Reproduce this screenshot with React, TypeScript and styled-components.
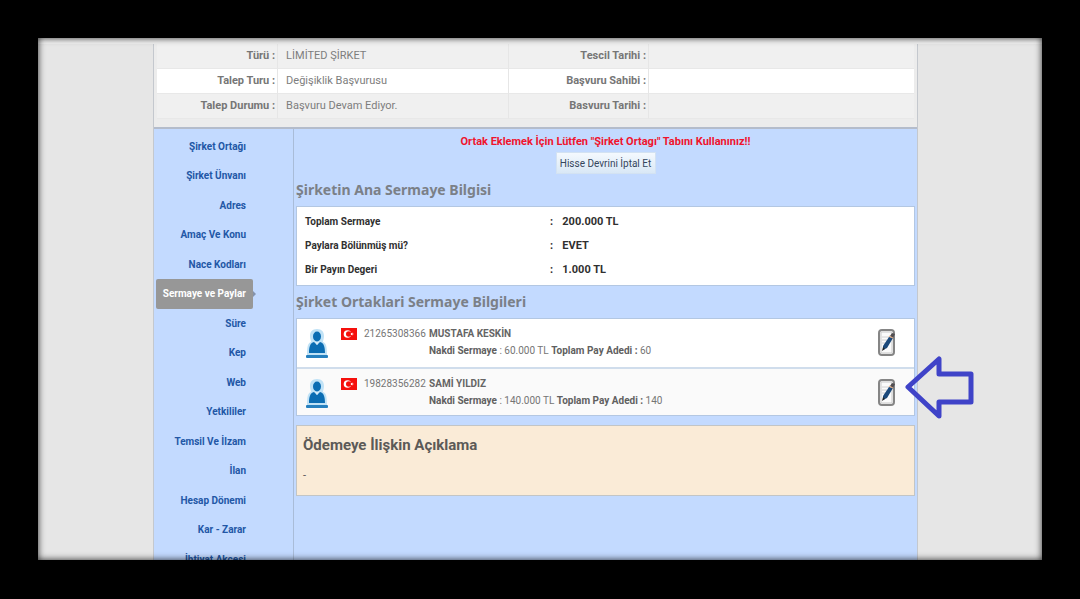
import React from "react";
import styled, { createGlobalStyle, css } from "styled-components";

const sans = `Roboto, "Liberation Sans", sans-serif`;
const heading = `"Noto Sans", "Open Sans", sans-serif`;

const GlobalStyle = createGlobalStyle`
  * { box-sizing: border-box; }
  body { margin: 0; background: #000; font-family: ${sans}; }
`;

const Stage = styled.div`
  display: flex;
  height: 100vh;
  padding: 38px 38px 39px;
  background: #000;
`;

const Frame = styled.div`
  position: relative;
  flex: 1;
  display: flex;
  flex-direction: column;
  overflow: hidden;
  background: #e6e6e6;

  &::after {
    content: "";
    position: absolute;
    inset: 0;
    box-shadow: inset 0 0 7px rgba(0, 0, 0, 0.85);
    pointer-events: none;
  }
`;

const TopStrip = styled.div`
  flex: none;
  height: 6px;
  background: #f2f2f2;
`;

const Columns = styled.div`
  flex: 1;
  display: grid;
  grid-template-columns: 115fr 765fr 124fr;
`;

const Page = styled.main`
  grid-column: 2;
  display: flex;
  flex-direction: column;
  border: solid #c4c8ce;
  border-width: 0 1px;
  background: #ececec;
`;

const InfoTable = styled.table`
  width: calc(100% - 6px);
  margin: 0 3px 8px;
  table-layout: fixed;
  border-collapse: separate;
  border-spacing: 0;
  font-size: 11px;
  line-height: 24px;
  color: #7d7d7d;

  tr { background: #f0f0f0; }
  tr:nth-child(even) { background: #fff; }
  th, td {
    padding: 0 8px;
    border-bottom: 1px solid #e8e8e8;
    text-align: left;
    white-space: nowrap;
  }
  th { padding: 0 2px; text-align: right; color: #767676; border-right: 1px solid #e6e6e6; }
  td:nth-child(2) { border-right: 1px solid #e6e6e6; }
`;

const Body = styled.div`
  flex: 1;
  display: flex;
  border-top: 2px solid #b4bccb;
  background: #c3daff;
`;

const Sidebar = styled.nav`
  flex: none;
  width: 140px;
  padding: 3px 0 0 2px;
  border-right: 1px solid #a9bcd8;
`;

const Menu = styled.ul`
  list-style: none;
  margin: 0;
  padding: 0;
  li { height: 29px; }
  li:nth-child(even) { margin-bottom: 1px; }
`;

const MenuLink = styled.a<{ $active?: boolean }>`
  position: relative;
  display: block;
  width: 97px;
  padding-right: 7px;
  border-radius: 2px;
  font-size: 10px;
  font-weight: bold;
  line-height: 30px;
  text-align: right;
  white-space: nowrap;
  text-decoration: none;
  color: #2257a6;

  ${(p) =>
    p.$active &&
    css`
      background: #979797;
      color: #fff;
      &::after {
        content: "";
        position: absolute;
        left: 100%;
        top: 12px;
        border: 3px solid transparent;
        border-left-color: #8492ab;
        border-right-width: 0;
      }
    `}
`;

const Content = styled.section`
  flex: 1;
  display: flex;
  flex-direction: column;
  padding: 3px 2px 0;
`;

const Warning = styled.p`
  margin: 0;
  text-align: center;
  font-size: 11px;
  font-weight: bold;
  line-height: 20px;
  color: #f0142d;
`;

const CancelButton = styled.button`
  align-self: center;
  width: 100px;
  height: 22px;
  padding: 0;
  border: 1px solid #d3e2f2;
  background: linear-gradient(#f4f9fe, #d9e8f6);
  font: 10px ${sans};
  white-space: nowrap;
  color: #35465c;
`;

const Title = styled.h2`
  margin: 0;
  padding-bottom: 1px;
  font: bold 14px/31px ${heading};
  color: #7b8087;
`;

const Panel = styled.div`
  border: 1px solid #b3c7e2;
  background: #fff;
`;

const CapitalTable = styled.table`
  width: 100%;
  margin: 3px 0;
  table-layout: fixed;
  border-collapse: collapse;
  font-size: 10px;
  font-weight: bold;
  line-height: 24px;
  color: #303030;

  th, td { padding: 0 8px; text-align: left; }
  td { padding: 0; font-size: 11px; }
`;

const Partners = styled.ul`
  list-style: none;
  margin: 0;
  padding: 0;
`;

const Partner = styled.li`
  position: relative;
  display: flex;
  height: 48px;
  padding: 6px 19px 0 9px;
  font-size: 10px;
  color: #757575;
  & + & { background: #fafafa; border-top: 2px solid #d0ddec; }
`;

const Avatar = styled.svg`
  flex: none;
  width: 22px;
  height: 30px;
  margin: 4px 13px 0 0;
`;

const Flag = styled.svg`
  flex: none;
  width: 16px;
  height: 12px;
  margin: 3px 7px 0 0;
`;

const Identity = styled.span`
  flex: none;
  width: 65px;
  line-height: 17px;
`;

const Details = styled.div`
  flex: 1;
  line-height: 17px;
  white-space: nowrap;
  b { color: #606060; }
`;

const Name = styled.div`
  font-weight: bold;
  color: #656565;
`;

const EditButton = styled.button`
  flex: none;
  width: 17px;
  height: 27px;
  margin-top: 4px;
  padding: 0;
  border: 0;
  background: none;
  svg { display: block; }
`;

const Pointer = styled.svg`
  position: absolute;
  top: -14px;
  right: -61px;
  width: 70px;
  height: 64px;
`;

const Note = styled.section`
  margin-top: 9px;
  height: 71px;
  padding: 4px 6px;
  border: 1px solid #c2c5c6;
  background: #faebd7;
  font-size: 11px;
  color: #555;
  p { margin: 0; line-height: 32px; }
`;

const NoteTitle = styled.h3`
  margin: 0;
  font-size: 15px;
  line-height: 30px;
  color: #5c5a57;
`;

const info = [
  ["Türü :", "LİMİTED ŞİRKET", "Tescil Tarihi :", ""],
  ["Talep Turu :", "Değişiklik Başvurusu", "Başvuru Sahibi :", ""],
  ["Talep Durumu :", "Başvuru Devam Ediyor.", "Basvuru Tarihi :", ""],
];

const menu = [
  "Şirket Ortağı", "Şirket Ünvanı", "Adres", "Amaç Ve Konu", "Nace Kodları",
  "Sermaye ve Paylar", "Süre", "Kep", "Web", "Yetkililer", "Temsil Ve İlzam",
  "İlan", "Hesap Dönemi", "Kar - Zarar", "İhtiyat Akçesi",
];

const capital = [
  ["Toplam Sermaye", "200.000 TL"],
  ["Paylara Bölünmüş mü?", "EVET"],
  ["Bir Payın Degeri", "1.000 TL"],
];

const partners = [
  { id: "21265308366", name: "MUSTAFA KESKİN", cash: "60.000 TL", shares: "60" },
  { id: "19828356282", name: "SAMİ YILDIZ", cash: "140.000 TL", shares: "140", marked: true },
];

function Person() {
  return (
    <Avatar viewBox="0 0 22 30" aria-hidden="true">
      <path d="M11 0C6 0 4 3 4 7c0 3 1 4 1 6-3 1-4 4-4 13h20c0-9-1-12-4-13 0-2 1-3 1-6 0-4-2-7-7-7z" fill="#c0e2f6" />
      <ellipse cx="11" cy="7.500" rx="4" ry="5" fill="#0b6db3" />
      <path d="M8 13l3 3 3-3c4 1 5 5 5 11H3c0-6 1-10 5-11z" fill="#0b6db3" />
      <path d="M9 13l2 3 2-3z" fill="#d5ecf9" />
      <rect x="0" y="26" width="22" height="3" rx="1" fill="#2680bf" />
    </Avatar>
  );
}

function TurkishFlag() {
  return (
    <Flag viewBox="0 0 16 12" role="img" aria-label="Türkiye">
      <rect width="16" height="12" fill="#f5100c" />
      <circle cx="6.5" cy="6" r="3.8" fill="#fff" />
      <circle cx="7.8" cy="6" r="2.8" fill="#f5100c" />
      <path d="M13 6l-3.500 1.300 1.800-3v3.400L9.500 4.700z" fill="#fff" />
    </Flag>
  );
}

function EditIcon() {
  return (
    <svg width="17" height="27" viewBox="0 0 17 27" aria-hidden="true">
      <rect x="1" y="1" width="15" height="25" rx="3" fill="#f3f3f3" stroke="#858585" strokeWidth="2" />
      <rect x="3" y="3" width="11" height="21" rx="1" fill="#fbfbfb" stroke="#c9c9c9" />
      <path d="M4 8h7M4 11h5M4 14h4" stroke="#d2d2d2" />
      <path d="M11 8l4 1-6 10-4 2 0-4z" fill="#1d4a7b" />
      <path d="M12 7l2-3 3 1-2 4z" fill="#514e51" />
      <path d="M11 7l4 2" stroke="#e9a674" />
      <path d="M4 22l1-4 2 2z" fill="#222" />
    </svg>
  );
}

export default function App() {
  return (
    <Stage>
      <GlobalStyle />
      <Frame>
        <TopStrip />
        <Columns>
          <Page>
            <InfoTable>
              <colgroup>
                <col style={{ width: "16%" }} />
                <col style={{ width: "30.5%" }} />
                <col style={{ width: "18.5%" }} />
                <col />
              </colgroup>
              <tbody>
                {info.map(([a, b, c, d]) => (
                  <tr key={a}>
                    <th scope="row">{a}</th>
                    <td>{b}</td>
                    <th scope="row">{c}</th>
                    <td>{d}</td>
                  </tr>
                ))}
              </tbody>
            </InfoTable>
            <Body>
              <Sidebar>
                <Menu>
                  {menu.map((m) => (
                    <li key={m}>
                      <MenuLink href="#" $active={m === "Sermaye ve Paylar"}>{m}</MenuLink>
                    </li>
                  ))}
                </Menu>
              </Sidebar>
              <Content>
                <Warning>Ortak Eklemek İçin Lütfen "Şirket Ortagı" Tabını Kullanınız!!</Warning>
                <CancelButton type="button">Hisse Devrini İptal Et</CancelButton>
                <Title>Şirketin Ana Sermaye Bilgisi</Title>
                <Panel>
                  <CapitalTable>
                    <colgroup>
                      <col style={{ width: "41%" }} />
                      <col style={{ width: "2%" }} />
                      <col />
                    </colgroup>
                    <tbody>
                      {capital.map(([label, value]) => (
                        <tr key={label}>
                          <th scope="row">{label}</th>
                          <td>:</td>
                          <td>{value}</td>
                        </tr>
                      ))}
                    </tbody>
                  </CapitalTable>
                </Panel>
                <Title>Şirket Ortaklari Sermaye Bilgileri</Title>
                <Panel>
                  <Partners>
                    {partners.map((p) => (
                      <Partner key={p.id}>
                        <Person />
                        <TurkishFlag />
                        <Identity>{p.id}</Identity>
                        <Details>
                          <Name>{p.name}</Name>
                          <b>Nakdi Sermaye</b> : {p.cash} <b>Toplam Pay Adedi :</b> {p.shares}
                        </Details>
                        <EditButton type="button" aria-label={`Düzenle ${p.name}`}>
                          <EditIcon />
                        </EditButton>
                        {p.marked && (
                          <Pointer viewBox="0 0 70 64" aria-hidden="true">
                            <path d="M3 32L34 4v15h32v28H34v14z" fill="none" stroke="#3f43c8" strokeWidth="5" strokeLinejoin="round" />
                          </Pointer>
                        )}
                      </Partner>
                    ))}
                  </Partners>
                </Panel>
                <Note>
                  <NoteTitle>Ödemeye İlişkin Açıklama</NoteTitle>
                  <p>-</p>
                </Note>
              </Content>
            </Body>
          </Page>
        </Columns>
      </Frame>
    </Stage>
  );
}
